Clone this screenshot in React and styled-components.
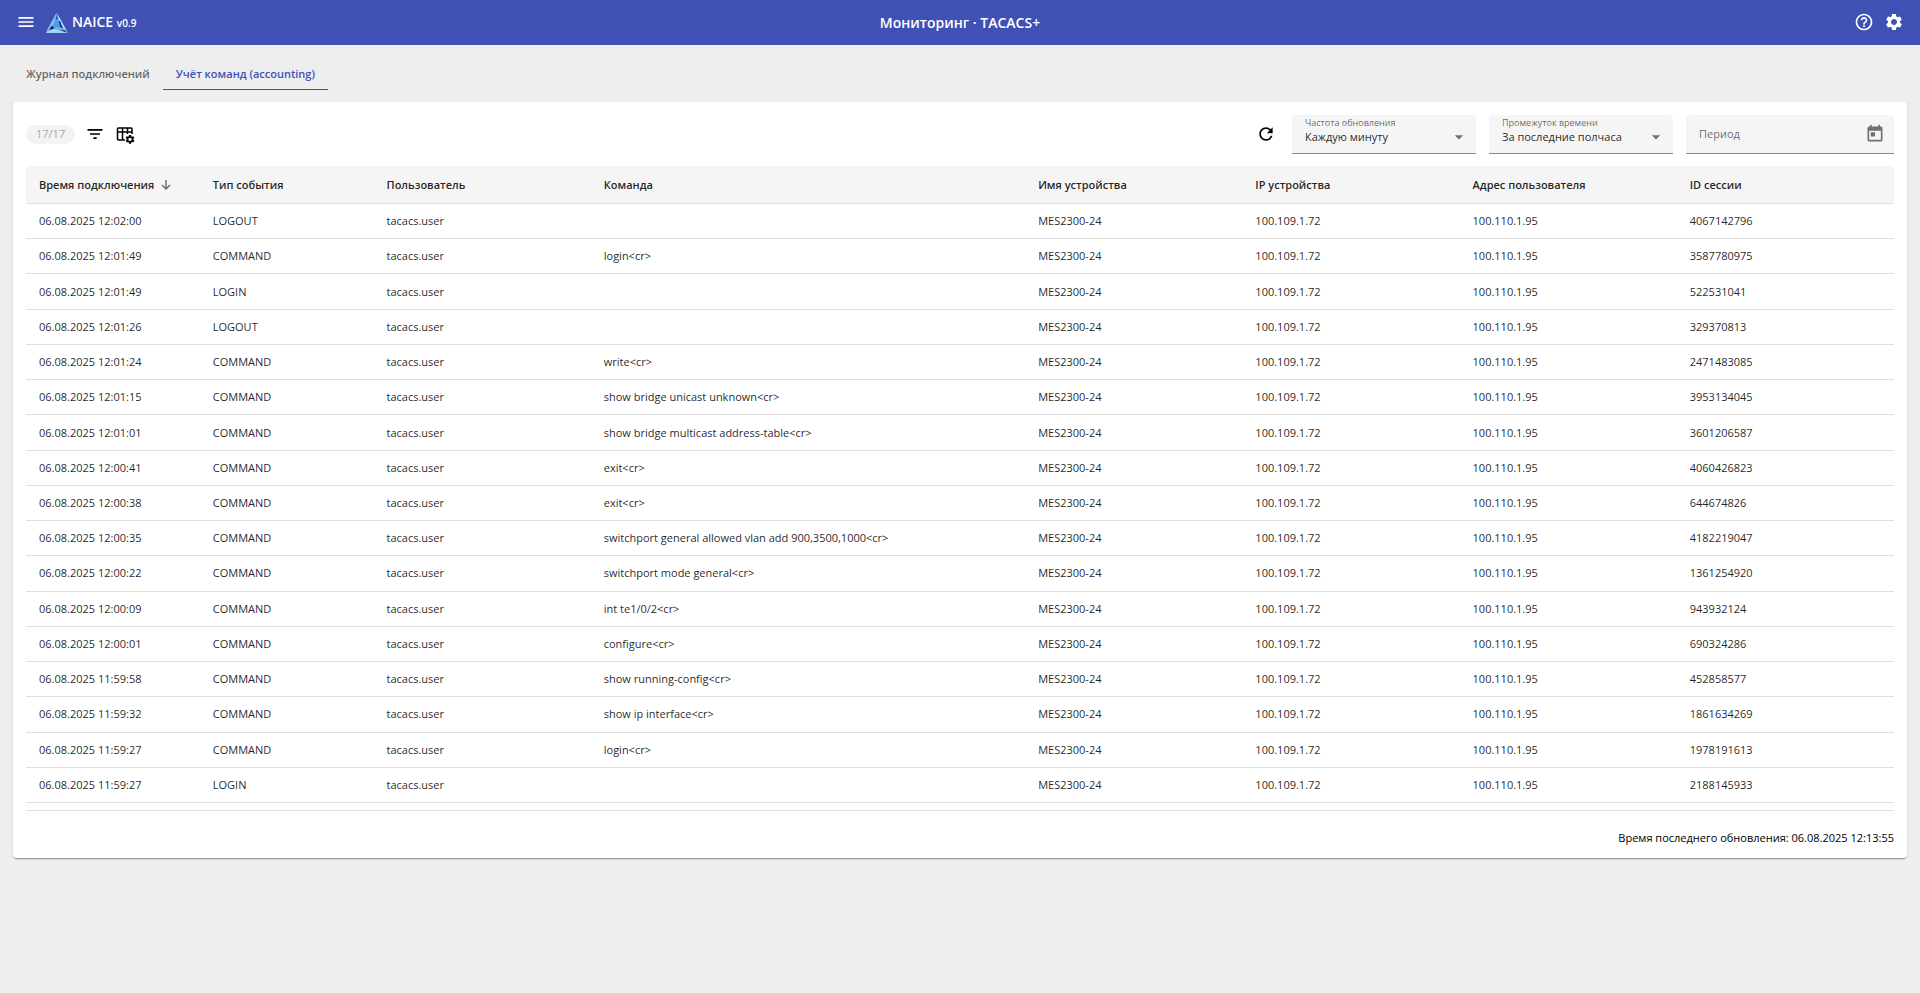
import React from 'react';
import styled, { createGlobalStyle } from 'styled-components';
import {
  MdMenu,
  MdHelpOutline,
  MdSettings,
  MdFilterList,
  MdRefresh,
  MdArrowDropDown,
  MdToday,
} from 'react-icons/md';

const columns = [
  { title: 'Время подключения', span: 4, sorted: true },
  { title: 'Тип события', span: 4 },
  { title: 'Пользователь', span: 5 },
  { title: 'Команда', span: 10 },
  { title: 'Имя устройства', span: 5 },
  { title: 'IP устройства', span: 5 },
  { title: 'Адрес пользователя', span: 5 },
  { title: 'ID сессии', span: 5 },
];

const totalSpan = columns.reduce((sum, c) => sum + c.span, 0);

const events = [
  ['12:02:00', 'LOGOUT', '', '4067142796'],
  ['12:01:49', 'COMMAND', 'login<cr>', '3587780975'],
  ['12:01:49', 'LOGIN', '', '522531041'],
  ['12:01:26', 'LOGOUT', '', '329370813'],
  ['12:01:24', 'COMMAND', 'write<cr>', '2471483085'],
  ['12:01:15', 'COMMAND', 'show bridge unicast unknown<cr>', '3953134045'],
  ['12:01:01', 'COMMAND', 'show bridge multicast address-table<cr>', '3601206587'],
  ['12:00:41', 'COMMAND', 'exit<cr>', '4060426823'],
  ['12:00:38', 'COMMAND', 'exit<cr>', '644674826'],
  ['12:00:35', 'COMMAND', 'switchport general allowed vlan add 900,3500,1000<cr>', '4182219047'],
  ['12:00:22', 'COMMAND', 'switchport mode general<cr>', '1361254920'],
  ['12:00:09', 'COMMAND', 'int te1/0/2<cr>', '943932124'],
  ['12:00:01', 'COMMAND', 'configure<cr>', '690324286'],
  ['11:59:58', 'COMMAND', 'show running-config<cr>', '452858577'],
  ['11:59:32', 'COMMAND', 'show ip interface<cr>', '1861634269'],
  ['11:59:27', 'COMMAND', 'login<cr>', '1978191613'],
  ['11:59:27', 'LOGIN', '', '2188145933'],
];

const GlobalStyle = createGlobalStyle`
  :root {
    --primary-color: #3f51b5;
    --bg-color: #eeeeee;
    --field-color: #f5f5f5;
    --text-color: rgba(0, 0, 0, 0.87);
    --muted-color: rgba(0, 0, 0, 0.54);
    --line-color: #e0e0e0;
  }
  * {
    box-sizing: border-box;
  }
  body {
    margin: 0;
    background-color: var(--bg-color);
    color: var(--text-color);
    font-family: 'Open Sans', 'Noto Sans', sans-serif;
    font-size: 11px;
    line-height: 16px;
  }
  button, input, select {
    font: inherit;
    color: inherit;
  }
  svg {
    display: block;
  }
`

const Header = styled.header`
  display: grid;
  grid-template-columns: 1fr auto 1fr;
  align-items: center;
  height: 45px;
  padding: 0 16px;
  background-color: var(--primary-color);
  color: #fff;
  h1 {
    font-size: 14px;
    font-weight: 600;
    line-height: 20px;
    margin: 0;
  }
`

const Brand = styled.div`
  display: flex;
  align-items: center;
  gap: 10px;
`

const BrandLink = styled.a`
  display: flex;
  align-items: center;
  gap: 4px;
  color: inherit;
  text-decoration: none;
  font-size: 14px;
  font-weight: 600;
  line-height: 20px;
  small {
    font-size: 10px;
  }
`

const Actions = styled.div`
  display: flex;
  justify-content: flex-end;
  gap: 10px;
`

const IconButton = styled.button`
  display: flex;
  align-items: center;
  justify-content: center;
  padding: 0 0 2px;
  border: 0;
  background: none;
  cursor: pointer;
  font-size: 20px;
`

const Tabs = styled.nav`
  display: flex;
  padding: 13px 13px 0;
`

const Tab = styled.a`
  padding: 8px 13px 7px;
  border-bottom: 1px solid ${p => (p.$active ? 'var(--primary-color)' : 'transparent')};
  color: ${p => (p.$active ? 'var(--primary-color)' : 'rgba(0, 0, 0, 0.6)')};
  font-weight: 600;
  text-decoration: none;
`

const Card = styled.main`
  margin: 12px 13px;
  padding: 13px 13px 12px;
  border-radius: 4px;
  background-color: #fff;
  box-shadow: 0 2px 1px -1px rgba(0, 0, 0, 0.2), 0 1px 1px rgba(0, 0, 0, 0.14), 0 1px 3px rgba(0, 0, 0, 0.12);
`

const Toolbar = styled.div`
  display: flex;
  align-items: center;
  justify-content: space-between;
  margin-bottom: 12px;
  button {
    color: #000;
  }
`

const Tools = styled.div`
  display: flex;
  align-items: center;
  gap: 10px;
`

const Filters = styled.div`
  display: flex;
  align-items: center;
  gap: 13px;
  button {
    margin-right: 3px;
  }
`

const Counter = styled.span`
  padding: 1px 10px 2px;
  border-radius: 10px;
  background-color: #f3f3f3;
  color: #a8a8a8;
`

const Field = styled.div`
  display: grid;
  align-items: center;
  width: ${p => p.$width}px;
  height: 39px;
  border-bottom: 1px solid #8c8c8c;
  border-radius: 4px 4px 0 0;
  background-color: var(--field-color);
  > * {
    grid-area: 1 / 1;
  }
  label {
    align-self: start;
    padding: 0 13px;
    color: rgba(0, 0, 0, 0.6);
    font-size: 9px;
  }
  select, input {
    width: 100%;
    height: 38px;
    padding: 6px 13px 0;
    border: 0;
    background: none;
    appearance: none;
    outline: none;
  }
  input {
    padding: 0 13px 2px;
  }
  input::placeholder {
    color: rgba(0, 0, 0, 0.6);
    opacity: 1;
  }
  svg {
    justify-self: end;
    margin-right: ${p => p.$inset || 7}px;
    color: var(--muted-color);
    font-size: 20px;
    pointer-events: none;
  }
  select + svg {
    margin-top: 6px;
  }
`

const Table = styled.table`
  width: 100%;
  height: 637px;
  table-layout: fixed;
  border-spacing: 0;
  text-align: left;
  th, td {
    padding: 0 13px;
    border-bottom: 1px solid var(--line-color);
  }
  th {
    height: 38px;
    background-color: var(--field-color);
    font-weight: 600;
    white-space: nowrap;
  }
  td {
    height: 35px;
  }
`

const HeadLabel = styled.span`
  display: flex;
  align-items: center;
  gap: 7px;
  svg {
    color: var(--muted-color);
  }
`

const Footer = styled.footer`
  margin-top: 7px;
  padding-top: 19px;
  border-top: 1px solid var(--line-color);
  color: #000;
  text-align: right;
`

function Logo() {
  return (
    <svg width="22" height="20" viewBox="0 0 22 20">
      <path d="M10.500 0L21.500 20H0Z" fill="#6fb4f4" />
      <path d="M10.500 0L6 14 0 19Z" fill="#86bdf2" />
      <path d="M11 0L21.500 19 15.500 13Z" fill="#a3dcf8" />
      <path d="M0 20L7 15.500 21.500 20Z" fill="#9bd8fb" />
      <path d="M6.500 14.500L10.500 6 14 14.500Z" fill="#4c97f0" />
      <path d="M3 17L6 12.500 8.500 15.500Z" fill="#16264f" />
      <path d="M12.500 8L14 8 17 15.500 14 14Z" fill="#1c3778" />
      <path d="M13 16.500L19 17.500 20.500 19.500Z" fill="#16264f" />
      <path d="M10.500 1L12 6 9.500 7.500Z" fill="#2c5cb0" />
    </svg>
  )
}

function TableSettingsIcon() {
  return (
    <svg width="20" height="20" viewBox="0 0 20 20">
      <path
        d="M10 16H3.500a1 1 0 0 1-1-1V5a1 1 0 0 1 1-1H16a1 1 0 0 1 1 1v5M2.500 8H17M7.500 4v12M12.500 4v6"
        fill="none"
        stroke="currentColor"
        strokeWidth="1.500"
      />
      <g transform="translate(9.500 9.800) scale(.46)">
        <MdSettings size={24} />
      </g>
    </svg>
  )
}

function SortArrow() {
  return (
    <svg width="10" height="10" viewBox="0 0 10 10">
      <path d="M5 0v9M1 5l4 4 4-4" fill="none" stroke="currentColor" strokeWidth="1.500" />
    </svg>
  )
}

function SelectField({ id, label, value }) {
  return (
    <Field $width={184}>
      <label htmlFor={id}>{label}</label>
      <select id={id} defaultValue={value}>
        <option>{value}</option>
      </select>
      <MdArrowDropDown />
    </Field>
  )
}

export default function App() {
  return (
    <>
      <GlobalStyle />
      <Header>
        <Brand>
          <IconButton aria-label="Меню"><MdMenu /></IconButton>
          <BrandLink href="#">
            <Logo />
            <span>NAICE <small>v0.9</small></span>
          </BrandLink>
        </Brand>
        <h1>Мониторинг · TACACS+</h1>
        <Actions>
          <IconButton aria-label="Справка"><MdHelpOutline /></IconButton>
          <IconButton aria-label="Настройки"><MdSettings /></IconButton>
        </Actions>
      </Header>
      <Tabs>
        <Tab href="#log">Журнал подключений</Tab>
        <Tab href="#accounting" $active>Учёт команд (accounting)</Tab>
      </Tabs>
      <Card>
        <Toolbar>
          <Tools>
            <Counter>17/17</Counter>
            <IconButton aria-label="Фильтр"><MdFilterList /></IconButton>
            <IconButton aria-label="Настройка столбцов"><TableSettingsIcon /></IconButton>
          </Tools>
          <Filters>
            <IconButton aria-label="Обновить"><MdRefresh /></IconButton>
            <SelectField id="rate" label="Частота обновления" value="Каждую минуту" />
            <SelectField id="range" label="Промежуток времени" value="За последние полчаса" />
            <Field $width={208} $inset={9}>
              <input id="period" aria-label="Период" placeholder="Период" />
              <MdToday />
            </Field>
          </Filters>
        </Toolbar>
        <Table>
          <colgroup>
            {columns.map(c => (
              <col key={c.title} style={{ width: `${(c.span / totalSpan) * 100}%` }} />
            ))}
          </colgroup>
          <thead>
            <tr>
              {columns.map(c => (
                <th key={c.title}>
                  <HeadLabel>
                    {c.title}
                    {c.sorted && <SortArrow />}
                  </HeadLabel>
                </th>
              ))}
            </tr>
          </thead>
          <tbody>
            {events.map(([time, type, command, session]) => (
              <tr key={session}>
                <td>06.08.2025 {time}</td>
                <td>{type}</td>
                <td>tacacs.user</td>
                <td>{command}</td>
                <td>MES2300-24</td>
                <td>100.109.1.72</td>
                <td>100.110.1.95</td>
                <td>{session}</td>
              </tr>
            ))}
          </tbody>
        </Table>
        <Footer>Время последнего обновления: 06.08.2025 12:13:55</Footer>
      </Card>
    </>
  )
}
